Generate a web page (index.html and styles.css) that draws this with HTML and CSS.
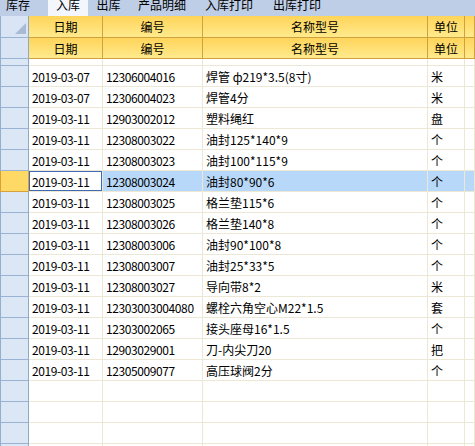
FILE: index.html
```html
<!DOCTYPE html>
<html lang="zh">
<head>
<meta charset="utf-8">
<link rel="stylesheet" href="styles.css">
</head>
<body>
<div class="tabs">
  <div class="tab t1">库存</div>
  <div class="tab t2 active">入库</div>
  <div class="tab t3">出库</div>
  <div class="tab t4">产品明细</div>
  <div class="tab t5">入库打印</div>
  <div class="tab t6">出库打印</div>
</div>
<div class="grid">
  <div class="g gh"><span class="corner"></span></div>
  <div class="h">日期</div><div class="h">编号</div><div class="h">名称型号</div><div class="h">单位</div><div class="h"></div>
  <div class="g gh"></div>
  <div class="h">日期</div><div class="h">编号</div><div class="h">名称型号</div><div class="h">单位</div><div class="h"></div>
  <div class="g"></div><div class="c"></div><div class="c"></div><div class="c"></div><div class="c"></div><div class="c"></div>

  <div class="g"></div><div class="c n">2019-03-07</div><div class="c n">12306004016</div><div class="c">焊管 ф219*3.5(8寸)</div><div class="c">米</div><div class="c"></div>
  <div class="g"></div><div class="c n">2019-03-07</div><div class="c n">12306004023</div><div class="c">焊管4分</div><div class="c">米</div><div class="c"></div>
  <div class="g"></div><div class="c n">2019-03-11</div><div class="c n">12903002012</div><div class="c">塑料绳红</div><div class="c">盘</div><div class="c"></div>
  <div class="g"></div><div class="c n">2019-03-11</div><div class="c n">12308003022</div><div class="c">油封125*140*9</div><div class="c">个</div><div class="c"></div>
  <div class="g"></div><div class="c n">2019-03-11</div><div class="c n">12308003023</div><div class="c">油封100*115*9</div><div class="c">个</div><div class="c"></div>
  <div class="g gsel"></div><div class="c n focus">2019-03-11</div><div class="c n sel">12308003024</div><div class="c sel">油封80*90*6</div><div class="c sel">个</div><div class="c sel"></div>
  <div class="g"></div><div class="c n">2019-03-11</div><div class="c n">12308003025</div><div class="c">格兰垫115*6</div><div class="c">个</div><div class="c"></div>
  <div class="g"></div><div class="c n">2019-03-11</div><div class="c n">12308003026</div><div class="c">格兰垫140*8</div><div class="c">个</div><div class="c"></div>
  <div class="g"></div><div class="c n">2019-03-11</div><div class="c n">12308003006</div><div class="c">油封90*100*8</div><div class="c">个</div><div class="c"></div>
  <div class="g"></div><div class="c n">2019-03-11</div><div class="c n">12308003007</div><div class="c">油封25*33*5</div><div class="c">个</div><div class="c"></div>
  <div class="g"></div><div class="c n">2019-03-11</div><div class="c n">12308003027</div><div class="c">导向带8*2</div><div class="c">米</div><div class="c"></div>
  <div class="g"></div><div class="c n">2019-03-11</div><div class="c n">12303003004080</div><div class="c">螺栓六角空心M22*1.5</div><div class="c">套</div><div class="c"></div>
  <div class="g"></div><div class="c n">2019-03-11</div><div class="c n">12303002065</div><div class="c">接头座母16*1.5</div><div class="c">个</div><div class="c"></div>
  <div class="g"></div><div class="c n">2019-03-11</div><div class="c n">12903029001</div><div class="c">刀-内尖刀20</div><div class="c">把</div><div class="c"></div>
  <div class="g"></div><div class="c n">2019-03-11</div><div class="c n">12305009077</div><div class="c">高压球阀2分</div><div class="c">个</div><div class="c"></div>

  <div class="g"></div><div class="c"></div><div class="c"></div><div class="c"></div><div class="c"></div><div class="c"></div>
  <div class="g"></div><div class="c"></div><div class="c"></div><div class="c"></div><div class="c"></div><div class="c"></div>
  <div class="g"></div><div class="c"></div><div class="c"></div><div class="c"></div><div class="c"></div><div class="c"></div>
  <div class="g"></div><div class="c"></div><div class="c"></div><div class="c"></div><div class="c"></div><div class="c"></div>
</div>
</body>
</html>
```
FILE: styles.css
```css
html, body {
  margin: 0;
  padding: 0;
  background: #ffffff;
  overflow: hidden;
}
body {
  width: 475px;
  height: 446px;
  font-family: "Noto Sans CJK SC", "Liberation Sans", sans-serif;
  font-size: 12px;
  color: #000;
}
.tabs {
  display: flex;
  height: 16px;
  background: #bdcee6;
  overflow: hidden;
}
.tab {
  height: 16px;
  line-height: 9px;
  text-align: center;
  box-sizing: border-box;
  white-space: nowrap;
}
.t1 { width: 48px; padding-right: 12px; }
.t2 { width: 40px; }
.t3 { width: 41px; }
.t4 { width: 66px; }
.t5 { width: 68px; }
.t6 { width: 68px; }
.tab.active { background: #f3f7fd; }

.grid {
  display: grid;
  grid-template-columns: 29px 74px 100px 225px 37px 1fr;
  grid-template-rows: 22px 21px 7px repeat(19, 21px);
  overflow: hidden;
}
.grid > div {
  box-sizing: border-box;
  white-space: nowrap;
  overflow: hidden;
}
.g {
  background: #dbe7f5;
  border-left: 1px solid #95add0;
  border-right: 1px solid #8ea8cc;
  border-bottom: 1px solid #9ab2d3;
  position: relative;
}
.gh {
  background: #d9e5f4;
}
.corner {
  position: absolute;
  right: 2px;
  bottom: 3px;
  width: 0;
  height: 0;
  border-left: 11px solid transparent;
  border-bottom: 11px solid #a8bbd6;
}
.h {
  background: linear-gradient(#ffd45a, #ffea8c);
  border-right: 1px solid #d0a23f;
  border-bottom: 1px solid #d0a23f;
  display: flex;
  align-items: center;
  justify-content: center;
}
.c {
  background: #ffffff;
  border-right: 1px solid #ede8d6;
  border-bottom: 1px solid #ede8d6;
  display: flex;
  align-items: center;
  padding-left: 3px;
}
.n {
  letter-spacing: -0.4px;
}
.sel {
  background: #b8d8f9;
}
.focus {
  background: #ffffff;
  box-shadow: inset 0 0 0 1px #3d6cb5;
}
.gsel {
  background: #ffd966;
  border-right-color: #d9a13b;
  border-bottom-color: #d9a13b;
  border-left-color: #d9a13b;
}
```
